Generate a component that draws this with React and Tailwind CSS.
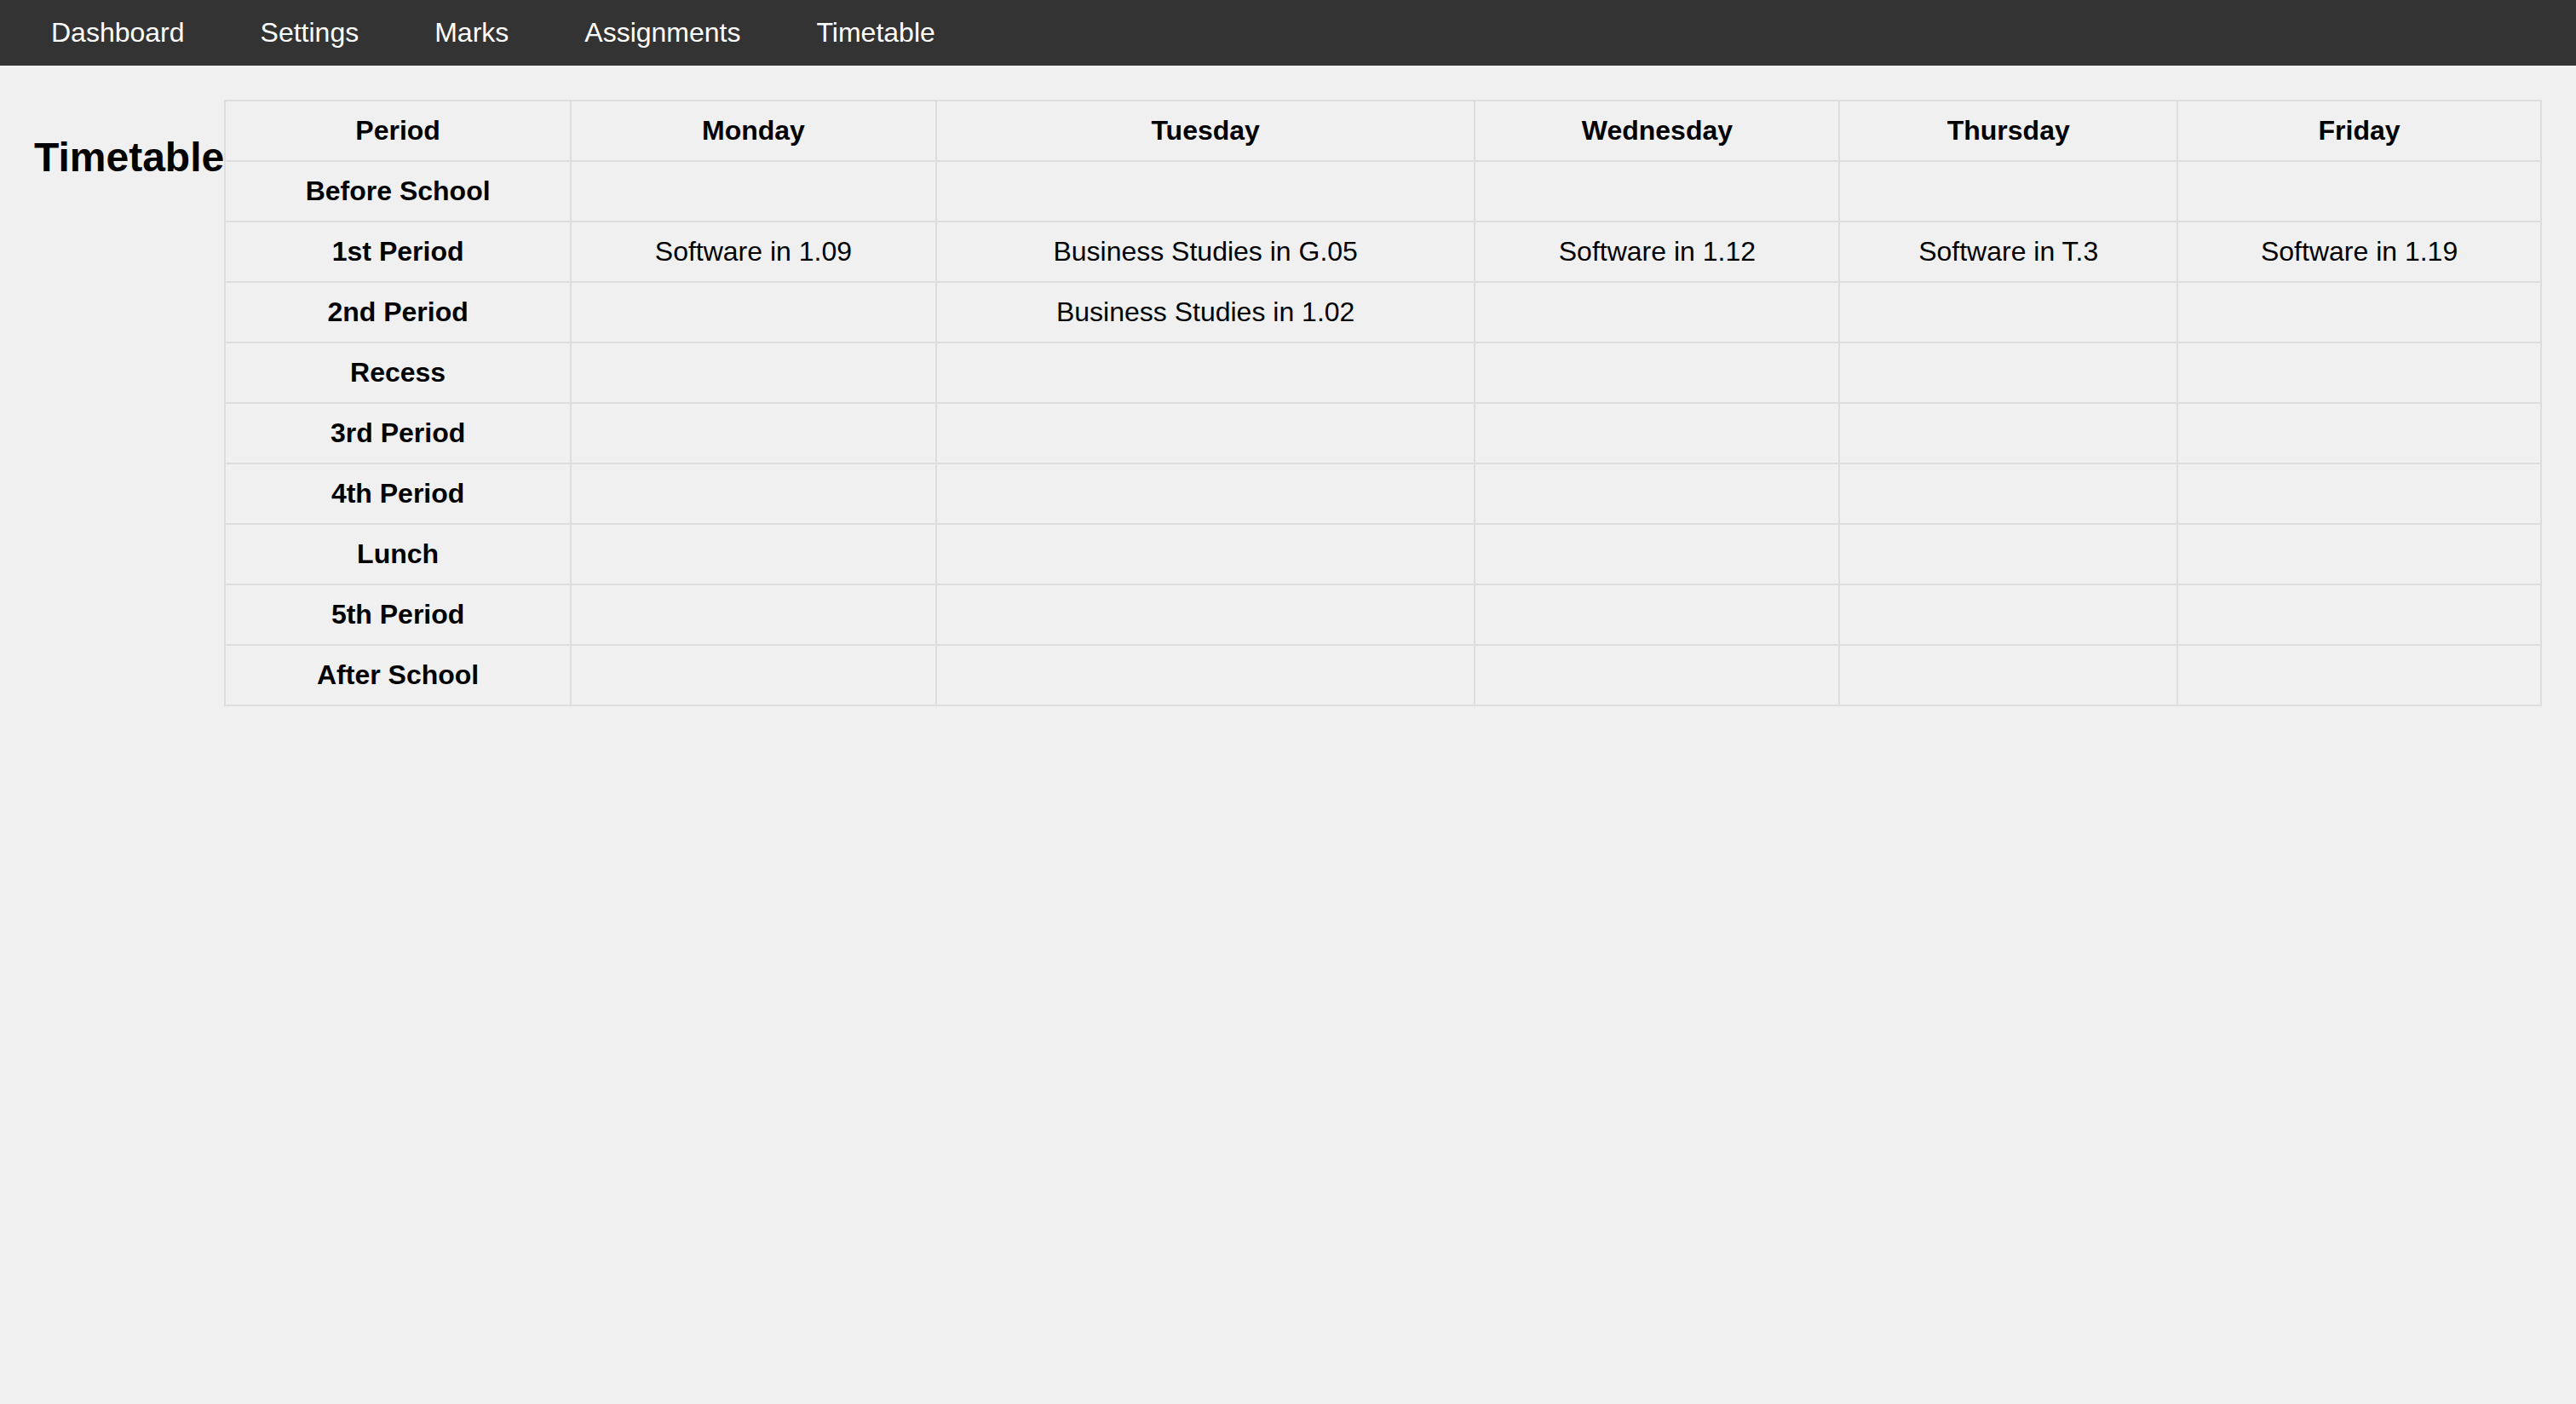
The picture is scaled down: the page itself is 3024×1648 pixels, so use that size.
import React from 'react'

const days = ['Monday', 'Tuesday', 'Wednesday', 'Thursday', 'Friday']

const periods = [
  { name: 'Before School', classes: {} },
  {
    name: '1st Period',
    classes: {
      Monday: 'Software in 1.09',
      Tuesday: 'Business Studies in G.05',
      Wednesday: 'Software in 1.12',
      Thursday: 'Software in T.3',
      Friday: 'Software in 1.19'
    }
  },
  { name: '2nd Period', classes: { Tuesday: 'Business Studies in 1.02' } },
  { name: 'Recess', classes: {} },
  { name: '3rd Period', classes: {} },
  { name: '4th Period', classes: {} },
  { name: 'Lunch', classes: {} },
  { name: '5th Period', classes: {} },
  { name: 'After School', classes: {} }
]

const navLinks = ['Dashboard', 'Settings', 'Marks', 'Assignments', 'Timetable']

function Nav() {
  return (
    <nav className="flex bg-[#333333] pl-[20px] gap-[9px]">
      {navLinks.map((l) => (
        <a key={l} href="#" className="px-[40px] py-[20px] text-[32px] leading-[37px] text-white">
          {l}
        </a>
      ))}
    </nav>
  )
}

const cell = 'border-2 border-[#dddddd] py-[16px] px-[16px] text-center text-[32px] leading-[37px]'

export default function App() {
  return (
    <div className="min-h-screen bg-[#f0f0f0] text-black font-['Liberation_Sans',Arial,sans-serif]">
      <Nav />
      <div className="flex items-start p-[40px]">
        <h2 className="my-[40px] text-[48px] font-bold leading-[55px] whitespace-nowrap">Timetable</h2>
        <table className="flex-1 table-fixed border-collapse">
          <colgroup>
            <col className="w-[406px]" />
            <col className="w-[429px]" />
            <col className="w-[633px]" />
            <col className="w-[428px]" />
            <col className="w-[397px]" />
            <col className="w-[427px]" />
          </colgroup>
          <thead>
            <tr>
              <th className={cell + ' font-bold'}>Period</th>
              {days.map((d) => (
                <th key={d} className={cell + ' font-bold'}>{d}</th>
              ))}
            </tr>
          </thead>
          <tbody>
            {periods.map((p) => (
              <tr key={p.name}>
                <th className={cell + ' font-bold'}>{p.name}</th>
                {days.map((d) => (
                  <td key={d} className={cell}>{p.classes[d] || ''}</td>
                ))}
              </tr>
            ))}
          </tbody>
        </table>
      </div>
    </div>
  )
}
